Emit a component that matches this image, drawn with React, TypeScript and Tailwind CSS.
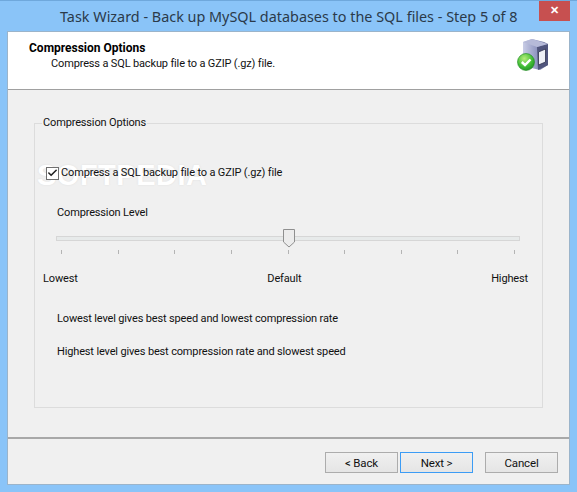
import { Check } from "lucide-react";

const TICKS = [0, 1, 2, 3, 4, 5, 6, 7, 8];

function ServerIcon() {
  return (
    <svg width="34" height="34" viewBox="0 0 34 34" className="block">
      <defs>
        <linearGradient id="body" x1="0" y1="0" x2="1" y2="0">
          <stop offset="0" stopColor="#c9cde6" />
          <stop offset="0.6" stopColor="#8b91bd" />
          <stop offset="1" stopColor="#5d6289" />
        </linearGradient>
        <radialGradient id="ok" cx="0.4" cy="0.3" r="0.8">
          <stop offset="0" stopColor="#b5ee7a" />
          <stop offset="0.6" stopColor="#3fbb35" />
          <stop offset="1" stopColor="#1c8a1f" />
        </radialGradient>
      </defs>
      <path d="M7 4 L16 1 L28 4 L32 6 L32 27 L24 32 L7 28 Z" fill="url(#body)" />
      <path d="M21 9 L32 6 L32 27 L22 32 Z" fill="#50557d" />
      <path d="M7 4 L16 1 L32 6 L21 9 Z" fill="#b6bad8" />
      <path d="M22.500 14 L29.500 11 L29.500 24 L22.500 27 Z" fill="#eef0f6" stroke="#30344f" strokeWidth="0.800" />
      <circle cx="10" cy="24" r="8.500" fill="url(#ok)" stroke="#1c8a1f" strokeWidth="0.600" />
      <path d="M5.800 24 L9 27 L14.500 21.500" fill="none" stroke="#ffffff" strokeWidth="2.400" />
    </svg>
  );
}

function Button({ label, focused }: { label: string; focused?: boolean }) {
  return (
    <button
      type="button"
      className={`h-[21px] w-[73px] border bg-gradient-to-b from-[#f0f0f0] to-[#e5e5e5] text-[11.5px] text-[#111] ${
        focused ? "border-[#3c9cf5]" : "border-[#acacac]"
      }`}
    >
      {label}
    </button>
  );
}

export default function App() {
  return (
    <div className="flex h-[492px] w-[577px] flex-col overflow-hidden bg-[#8ac4f8] font-['Roboto',sans-serif] text-[11px] leading-[16px] tracking-[-0.15px] text-[#111]">
      {/* Title bar */}
      <div className="relative h-[31px] shrink-0 border-t border-[#6fa8dc]">
        <h1 className="pl-[60px] pt-[6px] font-['Noto_Sans',sans-serif] text-[14.4px] font-normal leading-[20px] tracking-normal text-[#2b3a4a]">
          Task Wizard - Back up MySQL databases to the SQL files - Step 5 of 8
        </h1>
        <div className="absolute right-[7px] top-0 flex h-[20px] w-[31px] items-center justify-center bg-[#c75050] text-[11px] font-bold text-white">
          ✕
        </div>
      </div>

      {/* Client area */}
      <div className="mx-[7px] flex min-h-0 flex-1 flex-col border border-[#9bb4ca] bg-[#f0f0f0]">
        <div className="flex h-[58px] shrink-0 justify-between border-b border-[#a0a0a0] bg-white pl-[21px] pr-[19px]">
          <div className="pt-[9px]">
            <div className="text-[12px] font-bold leading-[15px] tracking-normal text-black">Compression Options</div>
            <div className="pl-[22px] leading-[15px]">Compress a SQL backup file to a GZIP (.gz) file.</div>
          </div>
          <div className="pt-[6px]">
            <ServerIcon />
          </div>
        </div>

        <div className="flex min-h-0 flex-1 flex-col px-[26px] pt-[25px]">
          <fieldset className="relative h-[293px] border border-[#dcdcdc] px-[8px]">
            <legend className="ml-[-1px] px-[1px] leading-[16px]">Compression Options</legend>

            <div
              aria-hidden
              className="absolute left-[2px] top-[30px] font-['Liberation_Sans',sans-serif] text-[29px] font-bold leading-[28px] tracking-[0.5px] text-white [text-shadow:0_0_2px_#dcdcdc]"
            >
              SOFTPEDIA
            </div>

            <label className="relative mt-[34px] flex items-center gap-[2px] pl-[3px]">
              <span className="flex h-[13px] w-[13px] items-center justify-center border border-[#707070] bg-white">
                <Check size={12} strokeWidth={3.5} className="text-[#222]" />
              </span>
              Compress a SQL backup file to a GZIP (.gz) file
            </label>

            <div className="mt-[24px] pl-[14px]">Compression Level</div>

            {/* Slider */}
            <div className="relative mt-[15px] ml-[13px] mr-[14px]">
              <div className="h-[5px] border border-[#d6d6d6] bg-[#e7eaea]" />
              <svg
                width="12"
                height="19"
                viewBox="0 0 12 19"
                className="absolute left-[227px] top-[-7px]"
              >
                <path d="M0.500 0.500 H11.500 V13 L6 18 L0.500 13 Z" fill="#ececec" stroke="#8f8f8f" />
              </svg>
              <div className="mt-[9px] flex justify-between px-[5px]">
                {TICKS.map((t) => (
                  <span key={t} className="h-[4px] w-px bg-[#b4b4b4]" />
                ))}
              </div>
            </div>

            <div className="mt-[17px] flex justify-between pr-[6px]">
              <span>Lowest</span>
              <span>Default</span>
              <span>Highest</span>
            </div>

            <p className="mt-[24px] pl-[14px]">Lowest level gives best speed and lowest compression rate</p>
            <p className="mt-[17px] pl-[14px]">Highest level gives best compression rate and slowest speed</p>
          </fieldset>
        </div>

        <div className="flex h-[47px] shrink-0 items-start border-t-2 border-[#a8a8a8] pl-[317px] pt-[13px]">
          <Button label="< Back" />
          <div className="ml-[2px]">
            <Button label="Next >" focused />
          </div>
          <div className="ml-[12px]">
            <Button label="Cancel" />
          </div>
        </div>
      </div>

      <div className="h-[7px] shrink-0" />
    </div>
  );
}
